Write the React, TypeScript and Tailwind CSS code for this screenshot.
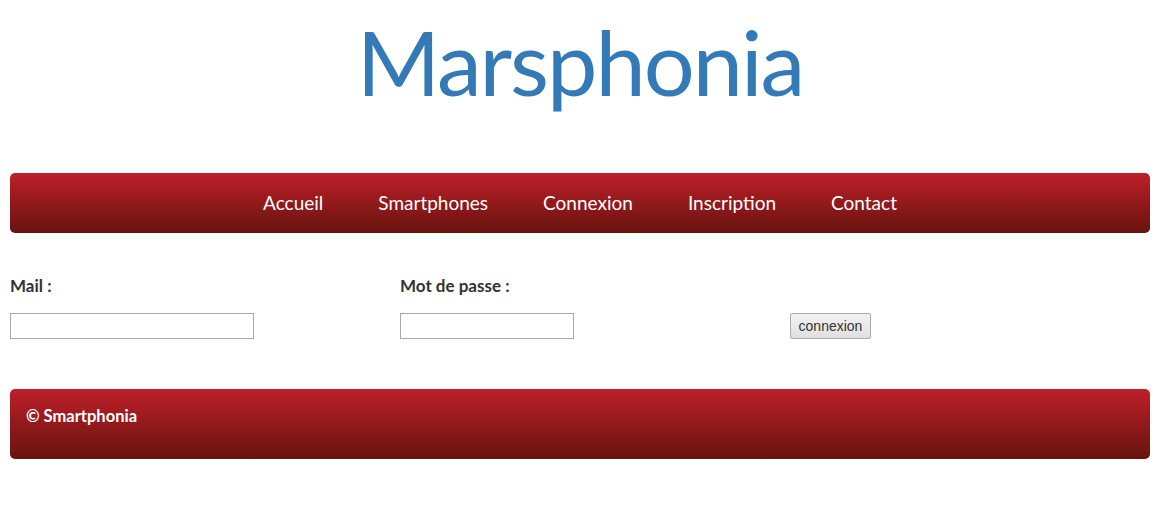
import React from "react";

export default function App() {
  const nav = ["Accueil", "Smartphones", "Connexion", "Inscription", "Contact"];
  return (
    <div className="w-[1162px] h-[522px] bg-white" style={{ fontFamily: "Lato, 'Open Sans', sans-serif" }}>
      <div className="w-[1140px] ml-[10px]">
        <header className="h-[173px] flex justify-center">
          <h1 className="text-[#337ab7] text-[90px] leading-none mt-[16px] tracking-[-2px]" style={{ fontFamily: "Lato, sans-serif" }}>
            Marsphonia
          </h1>
        </header>
        <nav className="h-[60px] rounded-[5px] bg-gradient-to-b from-[#bf1f2a] to-[#68130e] flex items-center justify-center gap-[55px]">
          {nav.map((n) => (
            <a key={n} className="text-white text-[19px]">{n}</a>
          ))}
        </nav>
        <form className="grid grid-cols-[390px_390px_1fr] pt-[40px] h-[156px]">
          <div className="flex flex-col">
            <label className="text-[#333] text-[17px] font-bold h-[40px]">Mail :</label>
            <input className="w-[244px] h-[26px] border border-[#a9a9a9] bg-white" />
          </div>
          <div className="flex flex-col">
            <label className="text-[#333] text-[17px] font-bold h-[40px]">Mot de passe :</label>
            <input type="password" className="w-[174px] h-[26px] border border-[#a9a9a9] bg-white" />
          </div>
          <div className="flex flex-col">
            <div className="h-[40px]" />
            <button type="button" className="w-[81px] h-[26px] border border-[#acacac] rounded-[2px] bg-gradient-to-b from-[#f2f2f2] to-[#e0e0e0] text-[#333] text-[14px]" style={{ fontFamily: "'Liberation Sans', Arial, sans-serif" }}>
              connexion
            </button>
          </div>
        </form>
        <footer className="h-[70px] rounded-[5px] bg-gradient-to-b from-[#bf1f2a] to-[#68130e] px-[16px] pt-[15px]">
          <p className="text-white text-[16.5px] font-bold">© Smartphonia</p>
        </footer>
      </div>
    </div>
  );
}
